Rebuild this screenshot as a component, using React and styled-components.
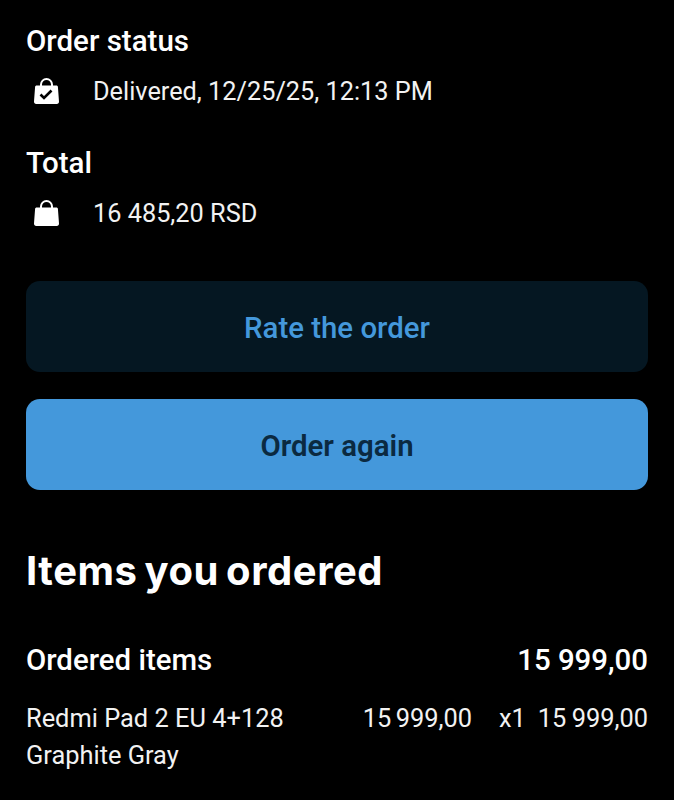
import React from "react";
import styled, { createGlobalStyle } from "styled-components";

const GlobalStyle = createGlobalStyle`
  html, body {
    margin: 0;
    background: #000;
  }
`;

const Page = styled.div`
  width: 674px;
  height: 800px;
  overflow: hidden;
  box-sizing: border-box;
  padding: 24px 26px 0 26px;
  background: #000;
  color: #fff;
  font-family: Roboto, "Liberation Sans", sans-serif;
`;

const Label = styled.div`
  font-size: 29.5px;
  line-height: 34px;
  font-weight: 500;
`;

const InfoRow = styled.div`
  display: flex;
  align-items: center;
  height: 34px;
  margin-top: 16px;
  margin-bottom: 38px;
  padding-left: 7px;
`;

const InfoIcon = styled.svg`
  width: 27px;
  height: 27px;
  margin-right: 33px;
  flex-shrink: 0;
`;

const InfoText = styled.div`
  font-size: 25.3px;
  color: #f2f2f2;
`;

const Buttons = styled.div`
  margin-top: 51px;
  display: flex;
  flex-direction: column;
  gap: 27px;
`;

const Button = styled.div`
  height: 91px;
  box-sizing: border-box;
  padding-top: 2px;
  border-radius: 14px;
  display: flex;
  align-items: center;
  justify-content: center;
  font-size: 29.4px;
  font-weight: ${(p) => (p.$primary ? 600 : 500)};
  background: ${(p) => (p.$primary ? "#4498db" : "#051722")};
  color: ${(p) => (p.$primary ? "#0b2a41" : "#4498db")};
`;

const Heading = styled.h2`
  margin: 56px 0 0 0;
  font-family: Inter, sans-serif;
  font-size: 40px;
  line-height: 50px;
  font-weight: 700;
  letter-spacing: 0.55px;
  word-spacing: -3px;
`;

const ItemsHead = styled.div`
  display: flex;
  justify-content: space-between;
  margin-top: 47px;
  font-size: 29.4px;
  line-height: 34px;
  font-weight: 500;
`;

const ItemRow = styled.div`
  display: flex;
  margin-top: 23px;
  font-size: 25.4px;
  line-height: 37px;
  color: #f2f2f2;
`;

const ItemName = styled.div`
  width: 300px;
`;

const UnitPrice = styled.div`
  width: 146px;
  text-align: right;
  word-spacing: -2px;
`;

const Quantity = styled.div`
  margin-left: 27px;
`;

const LineTotal = styled.div`
  margin-left: auto;
  word-spacing: -1px;
`;

const BagShape = () => (
  <>
    <path
      d="M8 8V6.500a5.500 5.500 0 0 1 11 0V8"
      fill="none"
      stroke="#fff"
      strokeWidth="2"
    />
    <path
      d="M3.600 7.500h19.800c.8 0 1.400.6 1.500 1.300l1.100 14.800c.1 1.300-.9 2.400-2.200 2.400H3.200c-1.300 0-2.300-1.100-2.200-2.400L2.100 8.800c.1-.7.700-1.300 1.500-1.300z"
      fill="#fff"
    />
  </>
);

const App = () => {
  return (
    <Page>
      <GlobalStyle />
      <Label>Order status</Label>
      <InfoRow>
        <InfoIcon viewBox="0 0 27 27">
          <BagShape />
          <path
            d="M7.500 16.500l3.500 3.500 7.500-7.500"
            fill="none"
            stroke="#000"
            strokeWidth="2.600"
          />
        </InfoIcon>
        <InfoText>Delivered, 12/25/25, 12:13 PM</InfoText>
      </InfoRow>
      <Label>Total</Label>
      <InfoRow>
        <InfoIcon viewBox="0 0 27 27">
          <BagShape />
        </InfoIcon>
        <InfoText>16 485,20 RSD</InfoText>
      </InfoRow>
      <Buttons>
        <Button>Rate the order</Button>
        <Button $primary>Order again</Button>
      </Buttons>
      <Heading>Items you ordered</Heading>
      <ItemsHead>
        <span>Ordered items</span>
        <span>15 999,00</span>
      </ItemsHead>
      <ItemRow>
        <ItemName>
          Redmi Pad 2 EU 4+128
          <br />
          Graphite Gray
        </ItemName>
        <UnitPrice>15 999,00</UnitPrice>
        <Quantity>x1</Quantity>
        <LineTotal>15 999,00</LineTotal>
      </ItemRow>
    </Page>
  );
};

export default App;
